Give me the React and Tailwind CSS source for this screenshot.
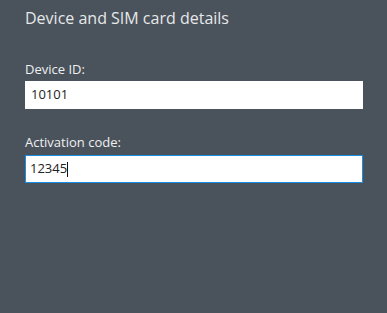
export default function App() {
  const font = { fontFamily: '"Open Sans", "Noto Sans", sans-serif' };
  return (
    <div className="w-[387px] h-[313px] bg-[#4a525b] pl-[25px] pr-[24px] pt-[7px]" style={font}>
      <h1 className="text-[16px] leading-[22px] text-[#e6e8ea] font-normal">Device and SIM card details</h1>
      <div className="mt-[31px] flex flex-col">
        <label className="text-[13px] leading-[18px] text-[#eef0f2] mb-[3px]">Device ID:</label>
        <div className="h-[28px] bg-white border border-white flex items-center px-[5px] text-[13px] text-[#222]">10101</div>
      </div>
      <div className="mt-[24px] flex flex-col">
        <label className="text-[13px] leading-[18px] text-[#eef0f2] mb-[4px]">Activation code:</label>
        <div className="h-[28px] bg-white border border-[#1a8ee2] flex items-center px-[4px] text-[13px] text-[#222]">
          <span>12345</span>
          <span className="inline-block w-px h-[15px] bg-[#111]" />
        </div>
      </div>
    </div>
  );
}
